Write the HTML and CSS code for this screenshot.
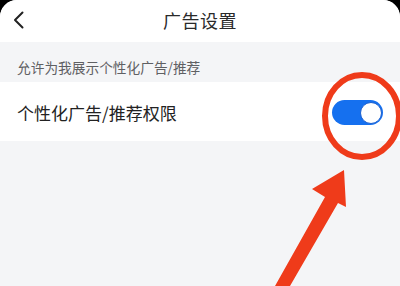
FILE: index.html
```html
<!DOCTYPE html>
<html lang="zh">
<head>
<meta charset="utf-8">
<link rel="stylesheet" href="styles.css">
</head>
<body>
<div class="screen">
  <header class="nav">
    <svg class="back" width="12" height="18" viewBox="0 0 12 18"><polyline points="9.5,1.5 2,9 9.5,16.5" fill="none" stroke="#222" stroke-width="2" stroke-linecap="round" stroke-linejoin="round"/></svg>
    <h1 class="title">广告设置</h1>
  </header>
  <div class="section-label">允许为我展示个性化广告/推荐</div>
  <div class="row">
    <span class="row-text">个性化广告/推荐权限</span>
    <span class="switch"><span class="knob"></span></span>
  </div>
  <svg class="annot" width="400" height="286" viewBox="0 0 400 286">
    <ellipse cx="362" cy="116" rx="37" ry="41" fill="none" stroke="#ef3b1a" stroke-width="6"/>
    <polygon points="344,170 312,189 325,197 275,286 290,286 338,203 346,207" fill="#ef3b1a"/>
  </svg>
</div>
</body>
</html>
```
FILE: styles.css
```css
html, body { margin: 0; padding: 0; }
body {
  background: #000;
  width: 400px;
  height: 286px;
  overflow: hidden;
  font-family: "Noto Sans CJK SC", "Noto Sans", sans-serif;
}
.screen {
  position: relative;
  width: 400px;
  height: 286px;
  background: #f4f5f7;
  border-radius: 17px 17px 0 0;
  overflow: hidden;
}
.nav {
  height: 42px;
  background: #fff;
  display: flex;
  align-items: center;
  justify-content: center;
  position: relative;
}
.back {
  position: absolute;
  left: 13px;
  top: 11px;
}
.title {
  margin: 0;
  font-size: 18px;
  font-weight: 400;
  color: #2a2a2a;
  letter-spacing: 0.5px;
  line-height: 1;
  margin-top: -3px;
}
.section-label {
  height: 40px;
  box-sizing: border-box;
  padding: 16px 0 0 17px;
  font-size: 13.7px;
  color: #5f6063;
  line-height: 18px;
}
.row {
  height: 59px;
  background: #fff;
  display: flex;
  align-items: center;
  justify-content: space-between;
  padding: 0 17px;
}
.row-text {
  font-size: 17px;
  color: #222;
  line-height: 1;
  margin-top: 2px;
}
.switch {
  width: 51px;
  height: 25px;
  border-radius: 13px;
  background: #1570ef;
  display: flex;
  align-items: center;
  justify-content: flex-end;
  box-sizing: border-box;
  padding-right: 1px;
  margin-top: 2px;
}
.knob {
  width: 22px;
  height: 22px;
  border-radius: 50%;
  background: #fff;
  border: 1px solid #1a5fd0;
  box-sizing: border-box;
}
.annot {
  position: absolute;
  left: 0;
  top: 0;
  pointer-events: none;
}
```
